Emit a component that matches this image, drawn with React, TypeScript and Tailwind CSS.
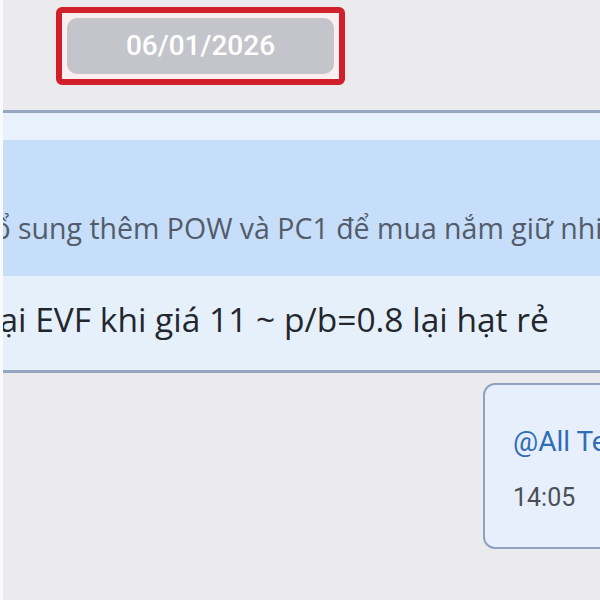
export default function App() {
  return (
    <div className="w-[600px] h-[600px] overflow-hidden bg-[#ebebee] flex font-['Open_Sans','Noto_Sans',sans-serif]">
      <div className="w-[3px] shrink-0 bg-[#f9fafd]" />
      <div className="flex-1 min-w-0 flex flex-col">
        {/* date separator, highlighted */}
        <div className="h-[110px] shrink-0 pt-[7px] pl-[53px]">
          <div className="w-[289px] h-[78px] rounded-[6px] border-[6px] border-[#d1202b] bg-[#fbeef0] p-[5px]">
            <div className="h-full rounded-[10px] bg-[#c4c5ca] flex items-center justify-center text-[28px] font-medium text-white font-['Roboto',sans-serif]">
              06/01/2026
            </div>
          </div>
        </div>

        {/* reply message */}
        <div className="shrink-0 w-[620px] border-y-[3px] border-[#94a6c0] bg-[#e6f0fb] flex flex-col overflow-hidden">
          <div className="h-[27px] bg-[#e8f1fc]" />
          <div className="h-[136px] bg-[#c6defa] pt-[71px] overflow-hidden whitespace-nowrap">
            <span className="block -ml-[27px] text-[28.5px] leading-[34px] text-[#535c6a]">
              bổ sung thêm POW và PC1 để mua nắm giữ nhiều hơn
            </span>
          </div>
          <div className="h-[94px] pt-[21px] overflow-hidden whitespace-nowrap">
            <span className="block -ml-[12px] text-[33.5px] leading-[44px] text-[#23272d]">
              lại EVF khi giá 11 ~ p/b=0.8 lại hạt rẻ
            </span>
          </div>
        </div>

        {/* own message */}
        <div className="mt-[10px] ml-[480px] w-[160px] h-[166px] shrink-0 rounded-[12px] border-2 border-[#8fa3c0] bg-[#e6effb] pl-[28px] pt-[40px] font-['Roboto',sans-serif] whitespace-nowrap">
          <div className="text-[28px] leading-[34px] text-[#2f6db6]">@All Team</div>
          <div className="mt-[24px] text-[25px] leading-[30px] text-[#4b4f55]">14:05</div>
        </div>
      </div>
    </div>
  );
}
